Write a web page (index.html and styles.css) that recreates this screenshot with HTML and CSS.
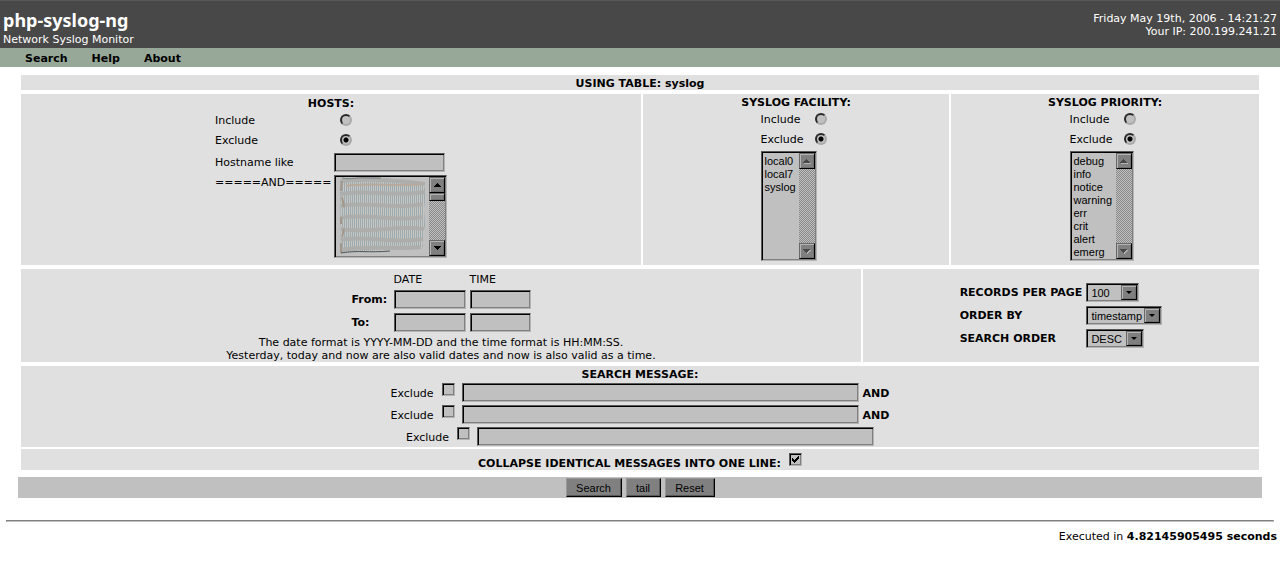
FILE: index.html
```html
<!DOCTYPE html>
<html lang="en">
<head>
<meta charset="utf-8">
<title>php-syslog-ng</title>
<link rel="stylesheet" href="styles.css">
</head>
<body>
<header class="header">
  <div>
    <h1 class="brand">php-syslog-ng</h1>
    <p class="tagline">Network Syslog Monitor</p>
  </div>
  <div class="session">
    <p>Friday May 19th, 2006 - 14:21:27</p>
    <p>Your IP: 200.199.241.21</p>
  </div>
</header>
<nav class="nav">
  <a href="#search">Search</a>
  <a href="#help">Help</a>
  <a href="#about">About</a>
</nav>

<svg class="defs" width="0" height="0" aria-hidden="true">
  <defs>
    <symbol id="arrow-up" viewBox="0 0 7 4"><path d="M3 0h1v1h1v1h1v1h1v1H0V3h1V2h1V1h1z"/></symbol>
    <symbol id="arrow-down" viewBox="0 0 7 4"><path d="M0 0h7v1H6v1H5v1H4v1H3V3H2V2H1V1H0z"/></symbol>
    <symbol id="drop" viewBox="0 0 5 3"><path d="M0 0h5v1H4v1H3v1H2V2H1V1H0z"/></symbol>
  </defs>
</svg>

<form id="search">
  <main class="panels">
    <h2 class="panel title">USING TABLE: syslog</h2>

    <div class="row row-filters">
      <section class="panel hosts">
        <h2 class="title">HOSTS:</h2>
        <div class="hosts-grid">
          <label for="h-inc">Include</label><input class="radio" type="radio" name="host" id="h-inc">
          <label for="h-exc">Exclude</label><input class="radio" type="radio" name="host" id="h-exc" checked>
          <label for="h-like">Hostname like</label><input class="field host-field" type="text" id="h-like">
          <label class="and-label" for="h-list">=====AND=====</label>
          <div class="listbox listbox-hosts">
            <select id="h-list" multiple size="6"></select>
            <svg class="scribble" viewBox="0 0 90 78" aria-hidden="true">
              <defs>
                <pattern id="weave" width="2" height="10" patternUnits="userSpaceOnUse">
                  <path d="M0 0h1v10H0z" fill="#9dabb0"/><path d="M1 0h1v10H1z" fill="#c6c7c3"/>
                </pattern>
                <filter id="smudge" x="-10%" y="-10%" width="120%" height="120%"><feGaussianBlur stdDeviation=".7"/></filter>
              </defs>
              <path fill="url(#weave)" d="M2 3 28 1 85 6 88 15 86 32 87 48 84 65 85 70 55 72 3 76z"/>
              <g fill="none" filter="url(#smudge)">
                <g stroke="#adaeab" stroke-width="4">
                  <path d="M3 4C25 1 58 3 87 7"/>
                  <path d="M3 17C24 12 56 20 87 15"/>
                  <path d="M3 29C28 24 58 33 85 27"/>
                  <path d="M3 41C27 36 60 45 85 40"/>
                  <path d="M3 52C30 57 57 48 86 52"/>
                  <path d="M3 63C26 58 60 67 85 62"/>
                  <path d="M3 73C27 68 57 73 83 70"/>
                </g>
                <path d="M4 4 3 14M4 20 6 30M3 40V47M6 52 4 60M3 66V76" stroke="#a3978b" stroke-width="2"/>
                <path d="M8 9C28 5 59 10 84 7" stroke="#b8a99d" stroke-width="2"/>
                <path d="M4 1C14 3 18 0 29 1H43" stroke="#777d7e"/>
                <path d="M3 76C20 73 31 76 52 74" stroke="#4e5558"/>
              </g>
            </svg>
            <div class="scroll" aria-hidden="true">
              <span class="key"><svg class="tri"><use href="#arrow-up"/></svg></span>
              <span class="thumb"></span>
              <span class="key key-end"><svg class="tri"><use href="#arrow-down"/></svg></span>
            </div>
          </div>
        </div>
      </section>

      <section class="panel choice">
        <h2 class="title">SYSLOG FACILITY:</h2>
        <div class="choice-grid">
          <label for="f-inc">Include</label><input class="radio" type="radio" name="fac" id="f-inc">
          <label for="f-exc">Exclude</label><input class="radio" type="radio" name="fac" id="f-exc" checked>
          <div class="listbox listbox-facility">
            <select multiple size="8" aria-label="Syslog facility">
              <option>local0</option><option>local7</option><option>syslog</option>
            </select>
            <div class="scroll" aria-hidden="true">
              <span class="key off"><svg class="tri"><use href="#arrow-up"/></svg></span>
              <span class="key key-end off"><svg class="tri"><use href="#arrow-down"/></svg></span>
            </div>
          </div>
        </div>
      </section>

      <section class="panel choice">
        <h2 class="title">SYSLOG PRIORITY:</h2>
        <div class="choice-grid">
          <label for="p-inc">Include</label><input class="radio" type="radio" name="pri" id="p-inc">
          <label for="p-exc">Exclude</label><input class="radio" type="radio" name="pri" id="p-exc" checked>
          <div class="listbox listbox-priority">
            <select multiple size="8" aria-label="Syslog priority">
              <option>debug</option><option>info</option><option>notice</option><option>warning</option>
              <option>err</option><option>crit</option><option>alert</option><option>emerg</option>
            </select>
            <div class="scroll" aria-hidden="true">
              <span class="key off"><svg class="tri"><use href="#arrow-up"/></svg></span>
              <span class="key key-end off"><svg class="tri"><use href="#arrow-down"/></svg></span>
            </div>
          </div>
        </div>
      </section>
    </div>

    <div class="row row-range">
      <section class="panel range">
        <div class="range-grid">
          <span></span><span>DATE</span><span>TIME</span>
          <label class="strong" for="from-date">From:</label>
          <input class="field" type="text" id="from-date"><input class="field" type="text" aria-label="From time">
          <label class="strong" for="to-date">To:</label>
          <input class="field" type="text" id="to-date"><input class="field" type="text" aria-label="To time">
        </div>
        <p>The date format is YYYY-MM-DD and the time format is HH:MM:SS.<br>Yesterday, today and now are also valid dates and now is also valid as a time.</p>
      </section>
      <section class="panel output">
        <div class="output-grid">
          <label for="limit">RECORDS PER PAGE</label>
          <span class="combo combo-limit"><select id="limit"><option>100</option></select><svg class="drop" aria-hidden="true"><use href="#drop"/></svg></span>
          <label for="order">ORDER BY</label>
          <span class="combo combo-order"><select id="order"><option>timestamp</option></select><svg class="drop" aria-hidden="true"><use href="#drop"/></svg></span>
          <label for="dir">SEARCH ORDER</label>
          <span class="combo combo-dir"><select id="dir"><option>DESC</option></select><svg class="drop" aria-hidden="true"><use href="#drop"/></svg></span>
        </div>
      </section>
    </div>

    <div class="messages">
      <section class="panel message">
        <h2 class="title">SEARCH MESSAGE:</h2>
        <div class="terms">
          <div class="term"><label for="x1">Exclude</label><input class="check" type="checkbox" id="x1"><input class="field term-field" type="text" aria-label="Message 1"><b>AND</b></div>
          <div class="term"><label for="x2">Exclude</label><input class="check" type="checkbox" id="x2"><input class="field term-field" type="text" aria-label="Message 2"><b>AND</b></div>
          <div class="term"><label for="x3">Exclude</label><input class="check" type="checkbox" id="x3"><input class="field term-field" type="text" aria-label="Message 3"></div>
        </div>
      </section>
      <section class="panel collapse">
        <label for="collapse">COLLAPSE IDENTICAL MESSAGES INTO ONE LINE:</label>
        <input class="check" type="checkbox" id="collapse" checked>
      </section>
    </div>
  </main>

  <div class="actions">
    <button class="btn btn-search" type="submit">Search</button>
    <button class="btn btn-tail" type="button">tail</button>
    <button class="btn btn-reset" type="reset">Reset</button>
  </div>
</form>
<hr class="rule">
<footer class="footer">Executed in <b>4.82145905495 seconds</b></footer>
</body>
</html>
```
FILE: styles.css
```css
* { box-sizing: border-box; }
body {
  margin: 0;
  background: #fff;
  color: #000;
  font: 11px/13px Verdana, "DejaVu Sans", sans-serif;
}
h1, h2, p { margin: 0; }
input, select, button { margin: 0; font: 11px/13px "Liberation Sans", Arial, sans-serif; color: #000; }
.defs { display: block; }

.header {
  display: flex;
  justify-content: space-between;
  padding: 7px 3px 2px;
  border-top: 1px solid #575757;
  background: #484848;
  color: #fff;
}
.brand { font: bold 18px/24px "Noto Sans", sans-serif; }
.tagline { padding-top: 1px; }
.session { padding-top: 4px; text-align: right; }
.nav {
  display: flex;
  gap: 24px;
  padding: 4px 25px 2px;
  background: #98a898;
  font-weight: bold;
}
.nav a { color: inherit; text-decoration: none; }

.panels { display: flex; flex-direction: column; gap: 4px; padding: 8px 21px 7px; }
.panel { background: #e0e0e0; }
.title { font-size: 11px; line-height: 13px; font-weight: bold; text-align: center; }
.panel.title { padding: 2px 0 0; }
.row { display: grid; gap: 2px; }
.row-filters { grid-template-columns: 620fr 306fr 308fr; }
.row-range { grid-template-columns: 840fr 396fr; }

.field, .check, .listbox, .combo {
  border: 1px solid;
  border-color: #585858 #b4b4b4 #b4b4b4 #585858;
  box-shadow: inset 1px 1px #000, inset -1px -1px #808080;
  background: #c0c0c0;
}
.field { width: 100%; height: 19px; padding: 2px 3px; }
.field, .check, .radio, .btn { appearance: none; border-radius: 0; }

.radio {
  width: 12px;
  height: 12px;
  border: 2px solid;
  border-color: #282828 #aaa #aaa #282828;
  border-radius: 50%;
  background: #c0c0c0;
}
.radio:checked { background: radial-gradient(circle, #000 2px, #c0c0c0 3px); }
.check { width: 13px; height: 13px; }
.check:checked {
  background: #c0c0c0 url("data:image/svg+xml,%3Csvg xmlns='http://www.w3.org/2000/svg' viewBox='0 0 7 7'%3E%3Cpath d='M0 2h1v1h1v1h1V3h1V2h1V1h1V0h1v3H6v1H5v1H4v1H3v1H2V6H1V5H0z'/%3E%3C/svg%3E") center / 7px 7px no-repeat;
}

.hosts { display: flex; flex-direction: column; align-items: center; padding: 3px 0 7px; }
.hosts-grid {
  display: grid;
  grid-template: 20px 20px 24px auto / 115px 113px;
  column-gap: 4px;
  align-items: center;
}
.hosts-grid .radio { margin-left: 6px; }
.hosts-grid .listbox { margin-top: 1px; }
.host-field { width: 111px; }
.and-label { align-self: start; padding-top: 2px; }

.choice { display: flex; flex-direction: column; align-items: center; padding: 2px 0 4px; }
.choice-grid {
  display: grid;
  grid-template: 20px 20px auto / 54px 17px;
  align-items: center;
}
.choice-grid .listbox { grid-column: 1 / -1; margin-top: 2px; }

.listbox { display: flex; position: relative; padding: 1px; }
.listbox select {
  flex: 1;
  min-width: 0;
  overflow: hidden;
  padding: 2px 0 0;
  border: 0;
  border-radius: 0;
  outline: 0;
  background: transparent;
  appearance: none;
}
.listbox option { min-height: 13px; padding: 0 2px; line-height: 13px; }
.listbox-hosts { height: 83px; }
.listbox-facility { width: 56px; height: 110px; }
.listbox-priority { width: 64px; height: 110px; }
.scribble { position: absolute; left: 3px; top: 1px; width: 90px; height: 78px; }
.scroll {
  display: flex;
  flex-direction: column;
  width: 16px;
  background: repeating-conic-gradient(#888 0 25%, #c0c0c0 0 50%) 0 0 / 2px 2px;
}
.key, .thumb {
  border: 1px solid;
  border-color: #686868 #000 #000 #686868;
  box-shadow: inset 1px 1px #b4b4b4, inset -1px -1px #707070;
  background: #808080;
}
.key { display: grid; place-items: center; height: 16px; }
.key-end { margin-top: auto; }
.thumb { height: 8px; }
.tri { display: block; width: 7px; height: 4px; }
.off .tri { fill: #484848; filter: drop-shadow(1px 1px #b4b4b4); }

.range { display: flex; flex-direction: column; align-items: center; padding-top: 4px; text-align: center; }
.range-grid {
  display: grid;
  grid-template-columns: 38px 72px 61px;
  gap: 4px;
  align-items: center;
  padding-bottom: 4px;
  text-align: left;
}
.strong { font-weight: bold; }
.output { display: grid; place-content: center; }
.output-grid { display: grid; grid-template-columns: auto 76px; gap: 4px; align-items: center; font-weight: bold; }
.combo { display: flex; position: relative; height: 19px; padding: 1px; }
.combo select {
  flex: 1;
  min-width: 0;
  padding: 1px 0 0 3px;
  border: 0;
  border-radius: 0;
  background: transparent;
  appearance: none;
}
.combo-limit { width: 53px; }
.combo-order { width: 76px; }
.combo-dir { width: 58px; }
.drop {
  position: absolute;
  right: 1px;
  top: 1px;
  width: 16px;
  height: 15px;
  padding: 5px 4px;
  border: 1px solid;
  border-color: #686868 #000 #000 #686868;
  box-shadow: inset 1px 1px #b4b4b4, inset -1px -1px #707070;
  background: #808080;
  pointer-events: none;
}

.messages { display: flex; flex-direction: column; gap: 2px; }
.message { padding: 2px 0 1px; }
.terms { display: flex; flex-direction: column; gap: 3px; padding-top: 2px; }
.term { display: flex; justify-content: center; align-items: center; }
.term .check { align-self: start; margin: 0 7px 0 8px; }
.term-field { width: 397px; }
.term label, .term b { padding-top: 2px; }
.term b { padding-left: 4px; }
.collapse { display: flex; justify-content: center; align-items: flex-start; gap: 8px; padding-top: 4px; font-weight: bold; }
.collapse label { padding-top: 4px; }

.actions { display: flex; justify-content: center; gap: 4px; margin: 0 18px; padding: 1px; background: #c0c0c0; }
.btn {
  height: 19px;
  padding: 1px 0 0;
  border: 1px solid;
  border-color: #989898 #000 #000 #989898;
  box-shadow: inset -1px -1px #585858;
  background: #808080;
}
.btn-search { width: 56px; }
.btn-tail { width: 35px; }
.btn-reset { width: 50px; }
.rule { margin: 22px 6px 8px; border: 1px solid; border-color: #808080 #c0c0c0 #c0c0c0 #808080; }
.footer { padding: 0 3px; text-align: right; }
```
